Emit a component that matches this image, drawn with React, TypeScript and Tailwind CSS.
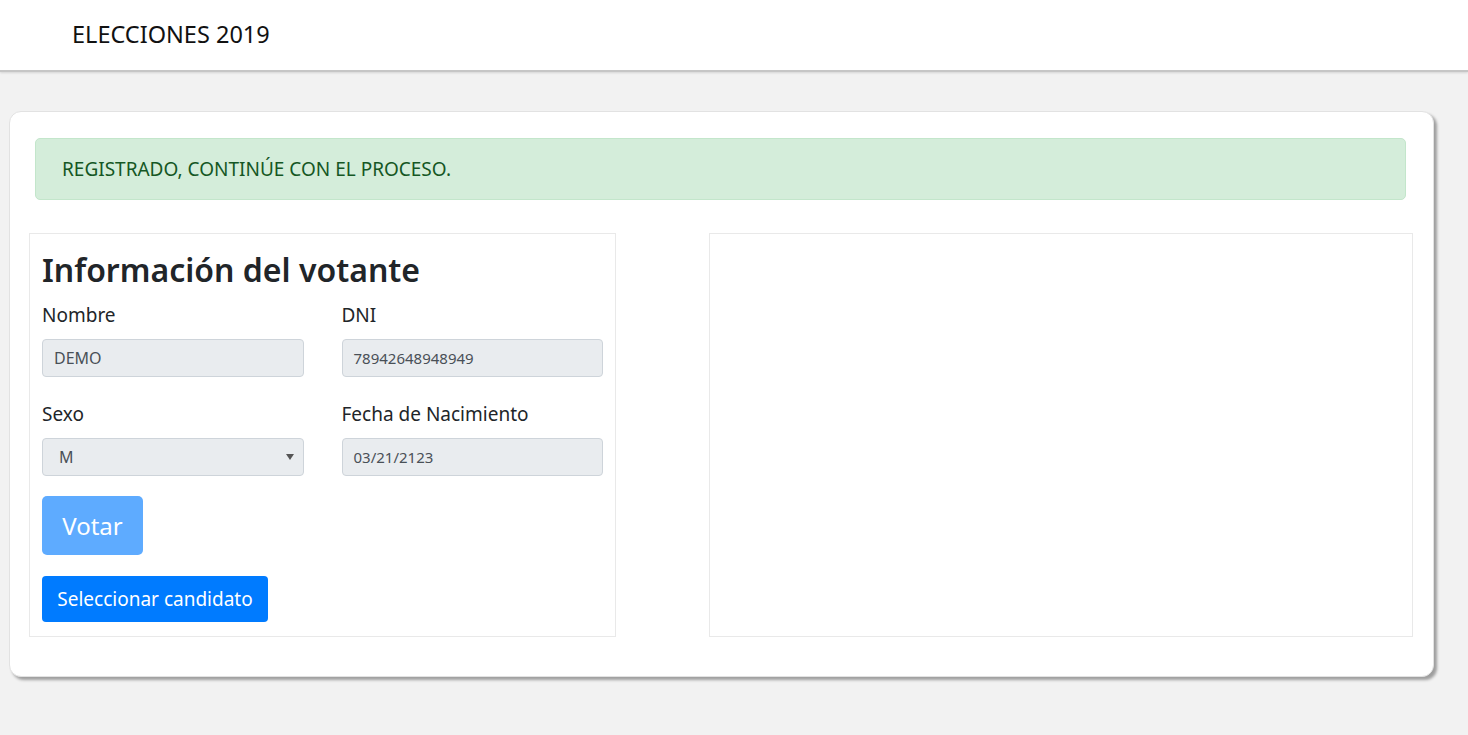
export default function App() {
  return (
    <div className="min-h-screen bg-[#f2f2f2] font-['Noto_Sans',sans-serif] text-[#212529]">
      <header className="flex h-[72px] items-center border-b-2 border-[#c6c6c6] bg-white pl-[72px] shadow-[0_1px_2px_rgba(0,0,0,0.12)]">
        <span className="text-[23.5px] leading-none text-[#111]">ELECCIONES 2019</span>
      </header>

      <main className="pt-[39px] pb-[40px] pl-[9px] pr-[34px]">
        <div className="rounded-[12px] border border-[#e2e2e2] bg-white pt-[26px] pb-[39px] pl-[19px] pr-[20px] shadow-[3px_3px_3px_rgba(0,0,0,0.35)]">
          <div className="ml-[6px] mr-[7px] flex h-[62px] items-center rounded-[5px] border border-[#c3e6cb] bg-[#d4edda] px-[26px] text-[19px] text-[#155724]">
            REGISTRADO, CONTINÚE CON EL PROCESO.
          </div>

          <div className="mt-[33px] flex">
            <section className="w-[587px] border border-[#e9e9e9] px-[12px] pb-[13px]">
              <h2 className="mt-[14px] text-[32px] font-semibold leading-[44px] text-[#212529]">
                Información del votante
              </h2>
              <div className="mt-[10px] grid grid-cols-2 gap-x-[38px]">
                <Field label="Nombre">
                  <div className="flex h-[38px] items-center rounded-[4px] border border-[#ced4da] bg-[#e9ecef] pl-[11px] text-[16px] text-[#495057]">
                    DEMO
                  </div>
                </Field>
                <Field label="DNI">
                  <div className="flex h-[38px] items-center rounded-[4px] border border-[#ced4da] bg-[#e9ecef] pl-[11px] text-[15px] text-[#495057]">
                    78942648948949
                  </div>
                </Field>
                <Field label="Sexo" top>
                  <div className="flex h-[38px] items-center justify-between rounded-[4px] border border-[#ced4da] bg-[#e9ecef] pl-[16px] pr-[9px] text-[16px] text-[#495057]">
                    <span>M</span>
                    <svg width="8" height="6" viewBox="0 0 8 6" aria-hidden>
                      <path d="M0 0h8L4 6z" fill="#555" />
                    </svg>
                  </div>
                </Field>
                <Field label="Fecha de Nacimiento" top>
                  <div className="flex h-[38px] items-center rounded-[4px] border border-[#ced4da] bg-[#e9ecef] pl-[11px] text-[15px] text-[#495057]">
                    03/21/2123
                  </div>
                </Field>
              </div>

              <button
                disabled
                className="mt-[20px] block h-[59px] w-[101px] rounded-[5px] bg-[#5eabff] text-[24px] text-white"
              >
                Votar
              </button>
              <button className="mt-[21px] block h-[46px] w-[226px] rounded-[4px] bg-[#007bff] text-[19px] text-white">
                Seleccionar candidato
              </button>
            </section>

            <section className="ml-[93px] h-[404px] flex-1 border border-[#e9e9e9]" />
          </div>
        </div>
      </main>
    </div>
  );
}

function Field({ label, top, children }: { label: string; top?: boolean; children: React.ReactNode }) {
  return (
    <div className={top ? 'mt-[24px]' : ''}>
      <label className="block text-[19px] leading-[26px] text-[#212529]">{label}</label>
      <div className="mt-[11px]">{children}</div>
    </div>
  );
}
